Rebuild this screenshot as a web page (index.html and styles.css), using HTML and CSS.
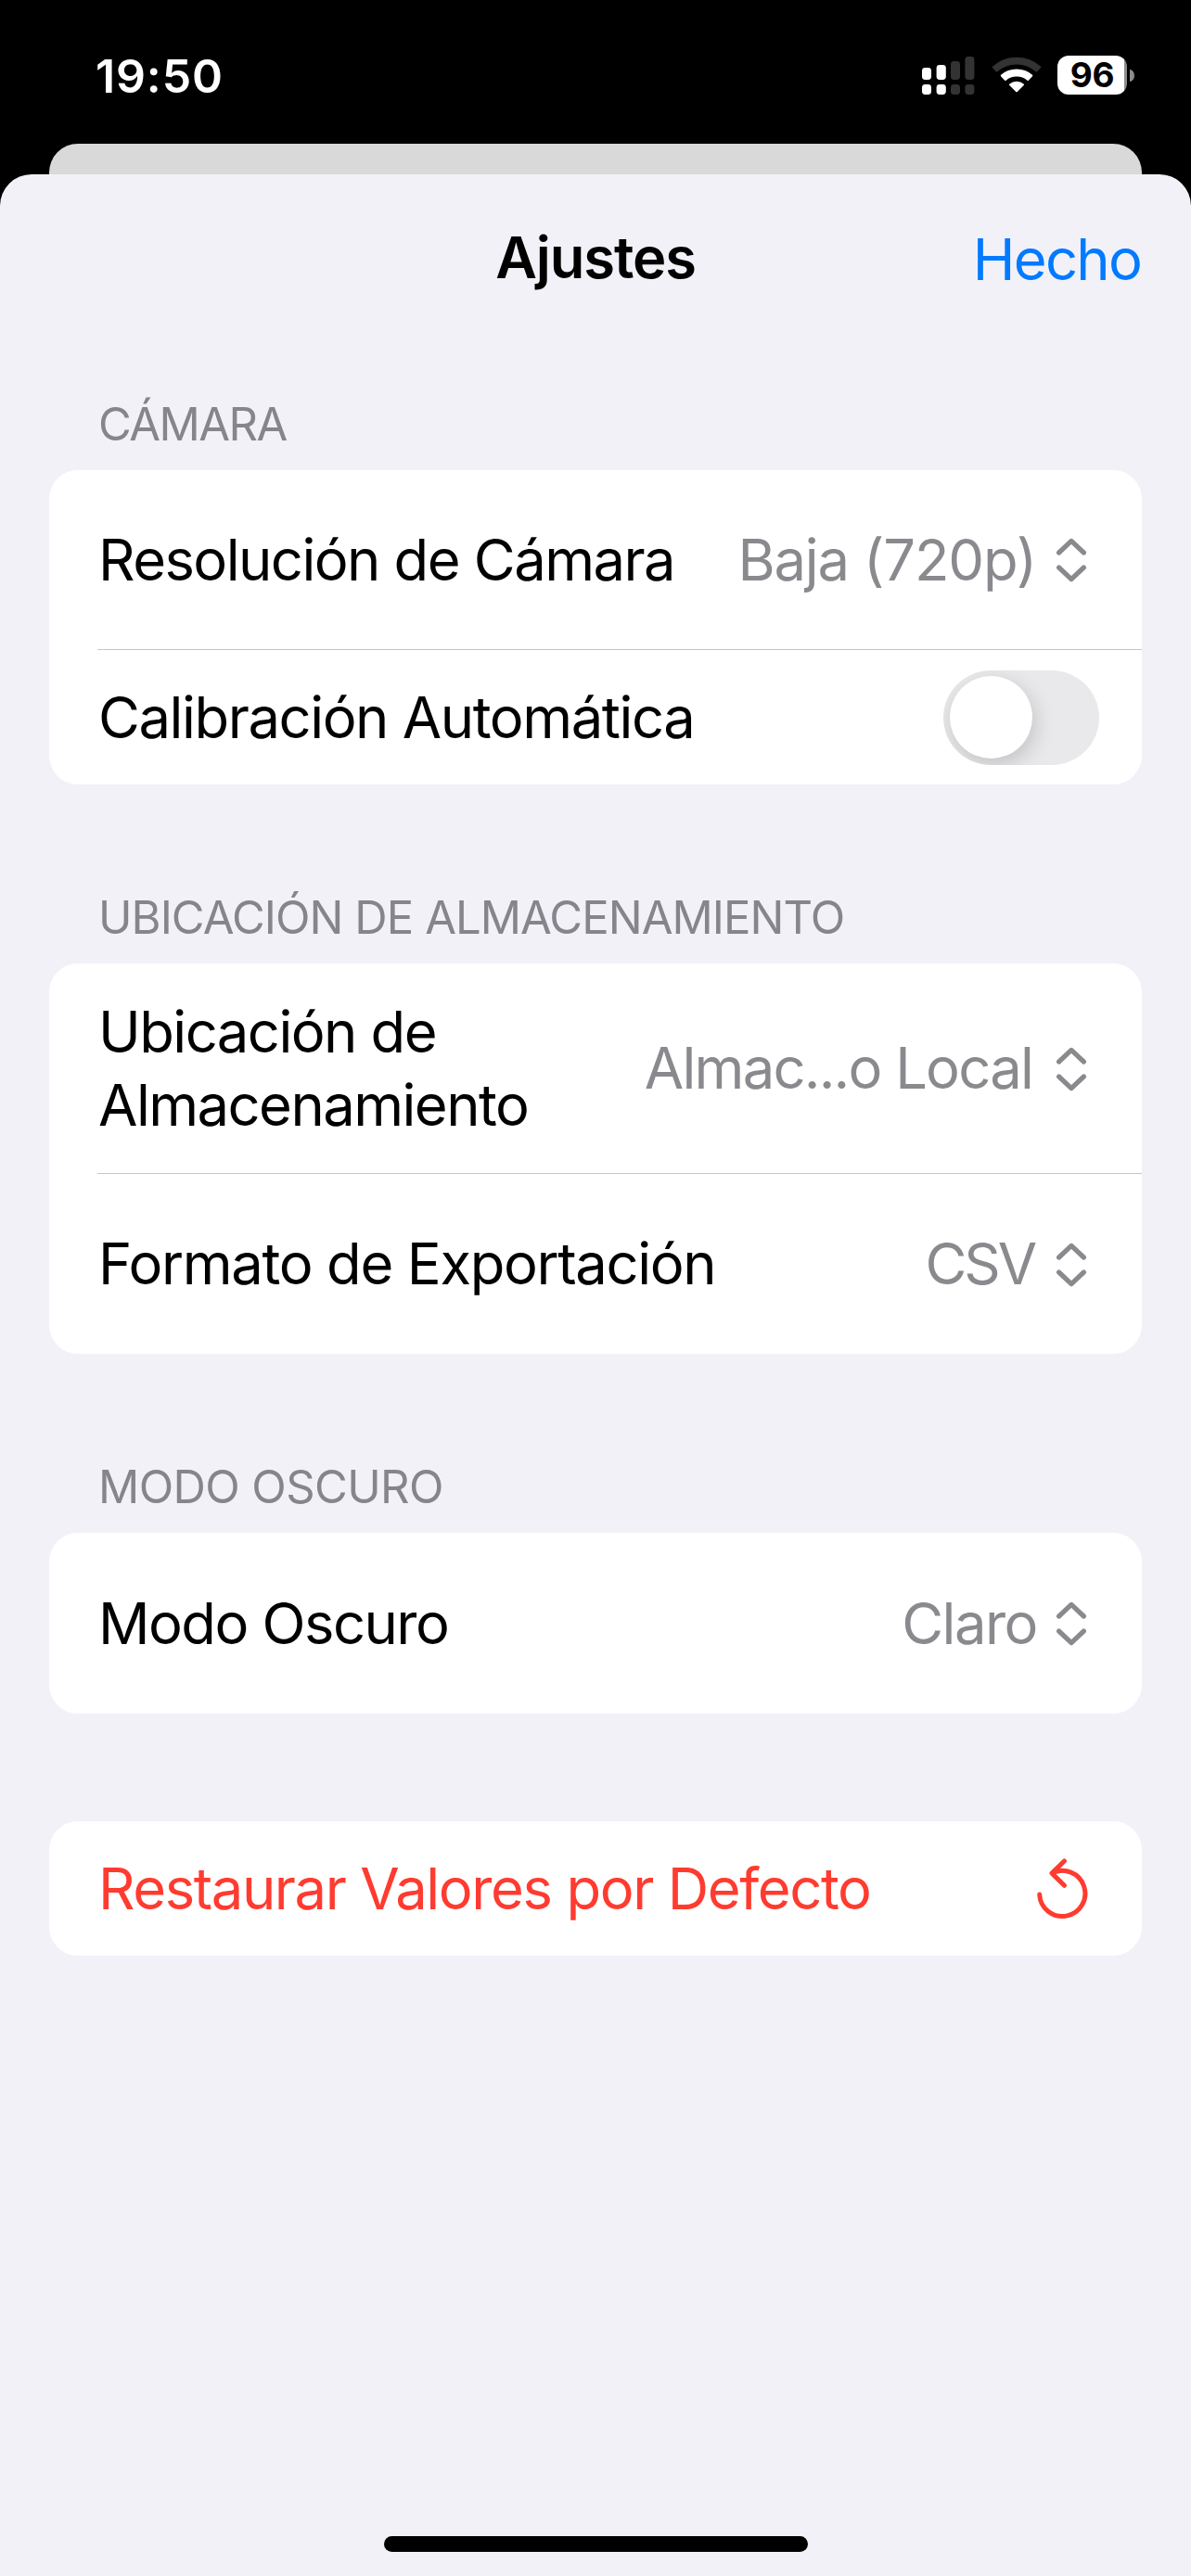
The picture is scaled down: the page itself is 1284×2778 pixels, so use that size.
FILE: index.html
```html
<!DOCTYPE html>
<html lang="es">
<head>
<meta charset="utf-8">
<title>Ajustes</title>
<link rel="stylesheet" href="styles.css">
</head>
<body>
<svg class="symbols" aria-hidden="true">
  <symbol id="chevrons" viewBox="0 0 34 50">
    <path d="M3.6 17 17 4.4 30.4 17M3.6 33 17 45.6 30.4 33" fill="none" stroke="currentColor" stroke-width="5.2" stroke-linecap="round" stroke-linejoin="round"/>
  </symbol>
</svg>
<div class="screen">
  <header class="status">
    <span class="status-time">19:50</span>
    <div class="status-icons">
      <svg class="signal" viewBox="0 0 56 42" aria-hidden="true">
        <g fill="#fff">
          <rect x="0" y="13" width="10" height="13" rx="3.4"/>
          <rect x="15.6" y="10" width="10.2" height="16" rx="3.4"/>
          <rect x="0" y="31" width="10" height="11" rx="3.4"/>
          <rect x="15.6" y="31" width="10.2" height="11" rx="3.4"/>
        </g>
        <g fill="#333">
          <rect x="31" y="6" width="10" height="20" rx="3.4"/>
          <rect x="46.4" y="1" width="10" height="25" rx="3.4"/>
          <rect x="31" y="31" width="10" height="11" rx="3.4"/>
          <rect x="46.4" y="31" width="10" height="11" rx="3.4"/>
        </g>
      </svg>
      <svg class="wifi" viewBox="0 0 54 42" aria-hidden="true">
        <g stroke-width="2" stroke-linejoin="round">
          <path d="M1.6 12.4A38 38 0 0 1 52.4 12.4L48.4 16.6A32.3 32.3 0 0 0 5.6 16.6Z" fill="#333" stroke="#333"/>
          <path d="M10.7 21.6A24.7 24.7 0 0 1 43.3 21.6L39.1 26A18.7 18.7 0 0 0 14.9 26Z" fill="#fff" stroke="#fff"/>
          <path d="M20 31.2A11.3 11.3 0 0 1 34 31.2L27 38.4Z" fill="#fff" stroke="#fff"/>
        </g>
      </svg>
      <div class="battery">
        <span class="battery-level">96</span>
        <i class="battery-cap"></i>
      </div>
    </div>
  </header>
  <div class="backdrop"></div>
  <main class="sheet">
    <nav class="navbar">
      <span></span>
      <h1 class="title">Ajustes</h1>
      <a class="done">Hecho</a>
    </nav>

    <section class="group">
      <h2 class="group-title t-camera">CÁMARA</h2>
      <div class="card">
        <div class="row tall">
          <span class="label">Resolución de Cámara</span>
          <span class="value v-low">Baja (720p)</span>
          <svg class="chevrons"><use href="#chevrons"/></svg>
        </div>
        <hr class="divider">
        <div class="row toggle-row">
          <span class="label l-auto">Calibración Automática</span>
          <span class="toggle"><i class="knob"></i></span>
        </div>
      </div>
    </section>

    <section class="group">
      <h2 class="group-title t-storage">UBICACIÓN DE ALMACENAMIENTO</h2>
      <div class="card">
        <div class="row double">
          <span class="label">Ubicación de<br>Almacenamiento</span>
          <span class="value v-local">Almac...o Local</span>
          <svg class="chevrons"><use href="#chevrons"/></svg>
        </div>
        <hr class="divider">
        <div class="row export">
          <span class="label l-format">Formato de Exportación</span>
          <span class="value v-csv">CSV</span>
          <svg class="chevrons"><use href="#chevrons"/></svg>
        </div>
      </div>
    </section>

    <section class="group">
      <h2 class="group-title t-dark">MODO OSCURO</h2>
      <div class="card">
        <div class="row mode">
          <span class="label">Modo Oscuro</span>
          <span class="value v-light">Claro</span>
          <svg class="chevrons"><use href="#chevrons"/></svg>
        </div>
      </div>
    </section>

    <section class="group">
      <div class="card">
        <div class="row reset">
          <span class="label l-reset">Restaurar Valores por Defecto</span>
          <svg class="reset-icon" viewBox="0 0 56 68" aria-hidden="true">
            <path d="M3.7 41A24.6 24.6 0 1 0 17 18.1M30.4 5 17 18.1 30.4 31.3" fill="none" stroke="currentColor" stroke-width="5" stroke-linecap="round" stroke-linejoin="round"/>
          </svg>
        </div>
      </div>
    </section>

    <div class="home-indicator"></div>
  </main>
</div>
</body>
</html>
```
FILE: styles.css
```css
* { box-sizing: border-box; margin: 0; padding: 0; }

body {
  background: #000;
  font-family: Inter, "Liberation Sans", sans-serif;
  color: #000;
}

.symbols { display: none; }

.screen {
  display: flex;
  flex-direction: column;
  width: 1284px;
  height: 2778px;
  overflow: hidden;
}

/* Status bar */
.status {
  display: flex;
  justify-content: space-between;
  align-items: flex-start;
  height: 155px;
  padding: 60px 61px 0 103px;
  color: #fff;
}

.status-time {
  margin-top: -8px;
  font-size: 50px;
  font-weight: 600;
  line-height: 60px;
  letter-spacing: .87px;
}

.status-icons { display: flex; align-items: flex-start; }

.signal { width: 56px; height: 42px; margin-right: 18.5px; overflow: visible; }

.wifi { width: 54px; height: 42px; margin-right: 17.5px; }

.battery { display: flex; align-items: center; gap: 3px; }

.battery-level {
  width: 75px;
  height: 42px;
  border-radius: 12px;
  background: linear-gradient(to right, #fff 72px, #8c8c8c 72px);
  color: #000;
  font-size: 37px;
  font-weight: 700;
  line-height: 42px;
  text-align: center;
  letter-spacing: -.2px;
}

.battery-cap {
  width: 5px;
  height: 13px;
  border-radius: 0 5px 5px 0 / 0 6.5px 6.5px 0;
  background: #8c8c8c;
}

/* Sheet stack */
.backdrop {
  flex: none;
  height: 33px;
  margin: 0 53px;
  border-radius: 31px 31px 0 0;
  background: #d9d9d9;
}

.sheet {
  display: flex;
  flex: 1;
  flex-direction: column;
  border-radius: 34px 34px 0 0;
  background: #f2f1f8;
}

.navbar {
  display: grid;
  grid-template-columns: 1fr auto 1fr;
  align-items: start;
  height: 239px;
  padding: 50px 54px 0;
  font-size: 61.5px;
  line-height: 80px;
}

.title { font-size: 61.5px; font-weight: 600; letter-spacing: -1.13px; }

.done {
  justify-self: end;
  margin-top: 2px;
  color: #007aff;
  letter-spacing: -1.76px;
}

/* Grouped list */
.group { padding: 0 53px; }
.group + .group { margin-top: 113px; }
.group:last-of-type { margin-top: 116px; }

.group-title {
  margin-bottom: 19px;
  padding: 1px 0 0 53px;
  color: #86858b;
  font-size: 49px;
  font-weight: 400;
  line-height: 60px;
  white-space: nowrap;
}

.t-camera { letter-spacing: -1.55px; }
.t-storage { letter-spacing: -.94px; }
.t-dark { letter-spacing: -.6px; }

.card { border-radius: 31px; background: #fff; }

.row {
  display: flex;
  align-items: center;
  padding: 0 59px 0 53px;
  font-size: 61.5px;
  line-height: 79px;
}

.tall { height: 193px; }
.toggle-row { height: 145px; padding-right: 46px; }
.double { height: 226px; }
.export { height: 194px; }
.mode { height: 195px; }
.reset { height: 145px; padding-right: 58px; color: #ff3b30; }

.label { flex: 1; padding-bottom: 1px; letter-spacing: -1.55px; white-space: nowrap; }
.l-auto { letter-spacing: -1.44px; }
.l-format { letter-spacing: -1.36px; }
.l-reset { letter-spacing: -1.41px; }

.value { padding-bottom: 1px; color: #8a8a8e; white-space: nowrap; }
.v-low { margin-right: 21px; letter-spacing: -1.17px; }
.v-local { margin-right: 25px; letter-spacing: -1.79px; }
.v-csv { margin-right: 23px; letter-spacing: -3.1px; }
.v-light { margin-right: 20px; letter-spacing: -1.5px; }

.chevrons { flex: none; width: 34px; height: 50px; margin-top: 1px; color: #8a8a8e; }

.divider { height: 1px; margin-left: 52px; border: 0; background: #c6c6c8; }

.toggle {
  display: flex;
  width: 168px;
  height: 102px;
  padding: 6.5px 7px;
  border-radius: 51px;
  background: #e9e9eb;
  overflow: hidden;
}

.knob {
  width: 89px;
  height: 89px;
  border-radius: 50%;
  background: #fff;
  box-shadow: 3px 7px 22px rgba(0, 0, 0, .17);
}

.reset-icon { width: 56px; height: 68px; margin-bottom: 2px; }

.home-indicator {
  flex: none;
  width: 457px;
  height: 17px;
  margin: auto auto 26px 414px;
  border-radius: 9px;
  background: #000;
}
```
